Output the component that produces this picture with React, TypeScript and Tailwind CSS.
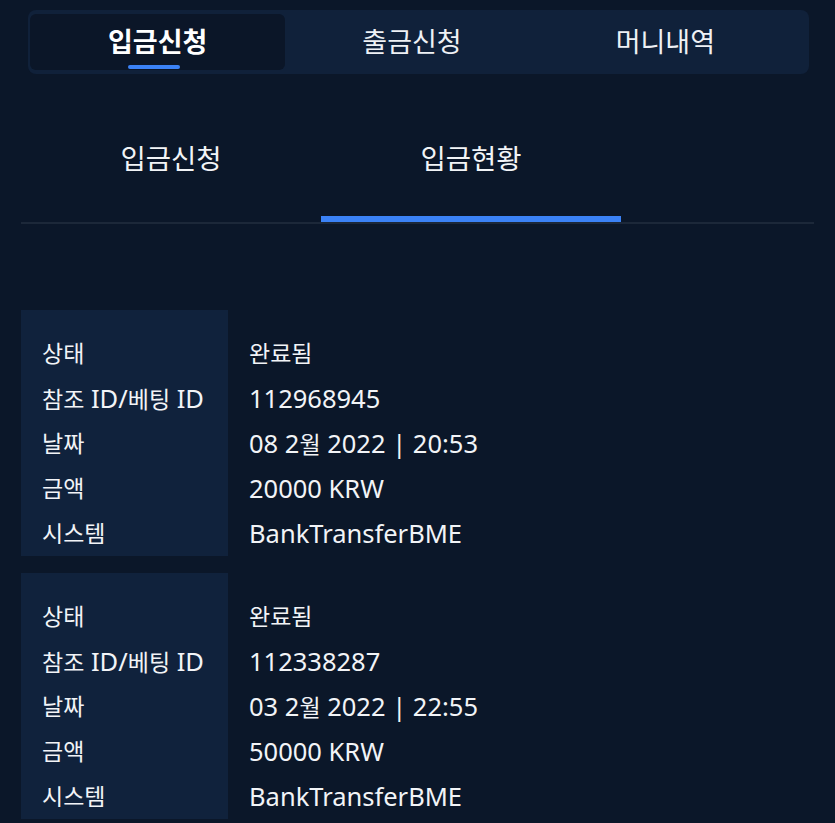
import React from "react";

const records = [
    {status: "완료됨", id: "112968945", date: "08 2월 2022 | 20:53", amount: "20000 KRW", system: "BankTransferBME"},
    {status: "완료됨", id: "112338287", date: "03 2월 2022 | 22:55", amount: "50000 KRW", system: "BankTransferBME"},
];

const labels = ["상태", "참조 ID/베팅 ID", "날짜", "금액", "시스템"];

// hangul runs render a bit smaller than the latin ones in the screenshot
function Mixed({text}: { text: string }) {
    const parts = text.split(/([\uAC00-\uD7A3]+)/).filter((p) => p !== "");
    return (
        <>
            {parts.map((p, i) =>
                /[\uAC00-\uD7A3]/.test(p) ? (
                    <span key={i} className="text-[23px]">{p}</span>
                ) : (
                    <span key={i} className="text-[25.5px] whitespace-pre">{p}</span>
                )
            )}
        </>
    );
}

export default function App() {
    const topTabs = ["입금신청", "출금신청", "머니내역"];

    return (
        <div
            className="w-[835px] h-[823px] overflow-hidden bg-[#0b1729] text-[#f2f4f7]"
            style={{fontFamily: '"Noto Sans", "Noto Sans CJK KR", sans-serif'}}
        >
            <div className="pt-[10px] pl-[28px] pr-[26px]">
                <div className="flex h-[64px] py-[4px] pl-[2px] pr-[17px] rounded-[8px] bg-[#10213a]">
                    {topTabs.map((tab, i) => (
                        <div
                            key={tab}
                            className={
                                i === 0
                                    ? "relative w-[256px] flex items-center justify-center rounded-[6px] bg-[#0b1628] text-[27px] font-bold text-white"
                                    : "w-[254px] flex items-center justify-center text-[27px] text-[#eef1f5]"
                            }
                        >
                            <span className="leading-none -mt-[2px]">{tab}</span>
                            {i === 0 && (
                                <div className="absolute bottom-[1px] left-[98px] w-[52px] h-[4px] rounded-full bg-[#3b82f6]"/>
                            )}
                        </div>
                    ))}
                </div>
            </div>

            <div className="mt-[48px] mx-[21px] border-b-2 border-[#1c2839]">
                <div className="flex">
                    <div className="w-[300px] h-[100px] flex justify-center pt-[23px] text-[27.5px] leading-none">입금신청</div>
                    <div className="w-[300px] h-[100px] flex justify-center pt-[23px] text-[27.5px] leading-none border-b-[6px] border-[#3b82f6] -mb-[2px]">
                        입금현황
                    </div>
                </div>
            </div>

            <div className="mt-[86px] mx-[21px] flex flex-col gap-[17px]">
                {records.map((r) => {
                    const values = [r.status, r.id, r.date, r.amount, r.system];
                    return (
                        <div key={r.id} className="flex">
                            <div className="w-[207px] bg-[#10223c] pt-[21px] pl-[21px]">
                                {labels.map((l) => (
                                    <div key={l} className="h-[45px] flex items-center"><span><Mixed text={l}/></span></div>
                                ))}
                            </div>
                            <div className="pt-[21px] pl-[21px]">
                                {values.map((v, i) => (
                                    <div key={i} className="h-[45px] flex items-center"><span><Mixed text={v}/></span></div>
                                ))}
                            </div>
                        </div>
                    );
                })}
            </div>
        </div>
    );
}
